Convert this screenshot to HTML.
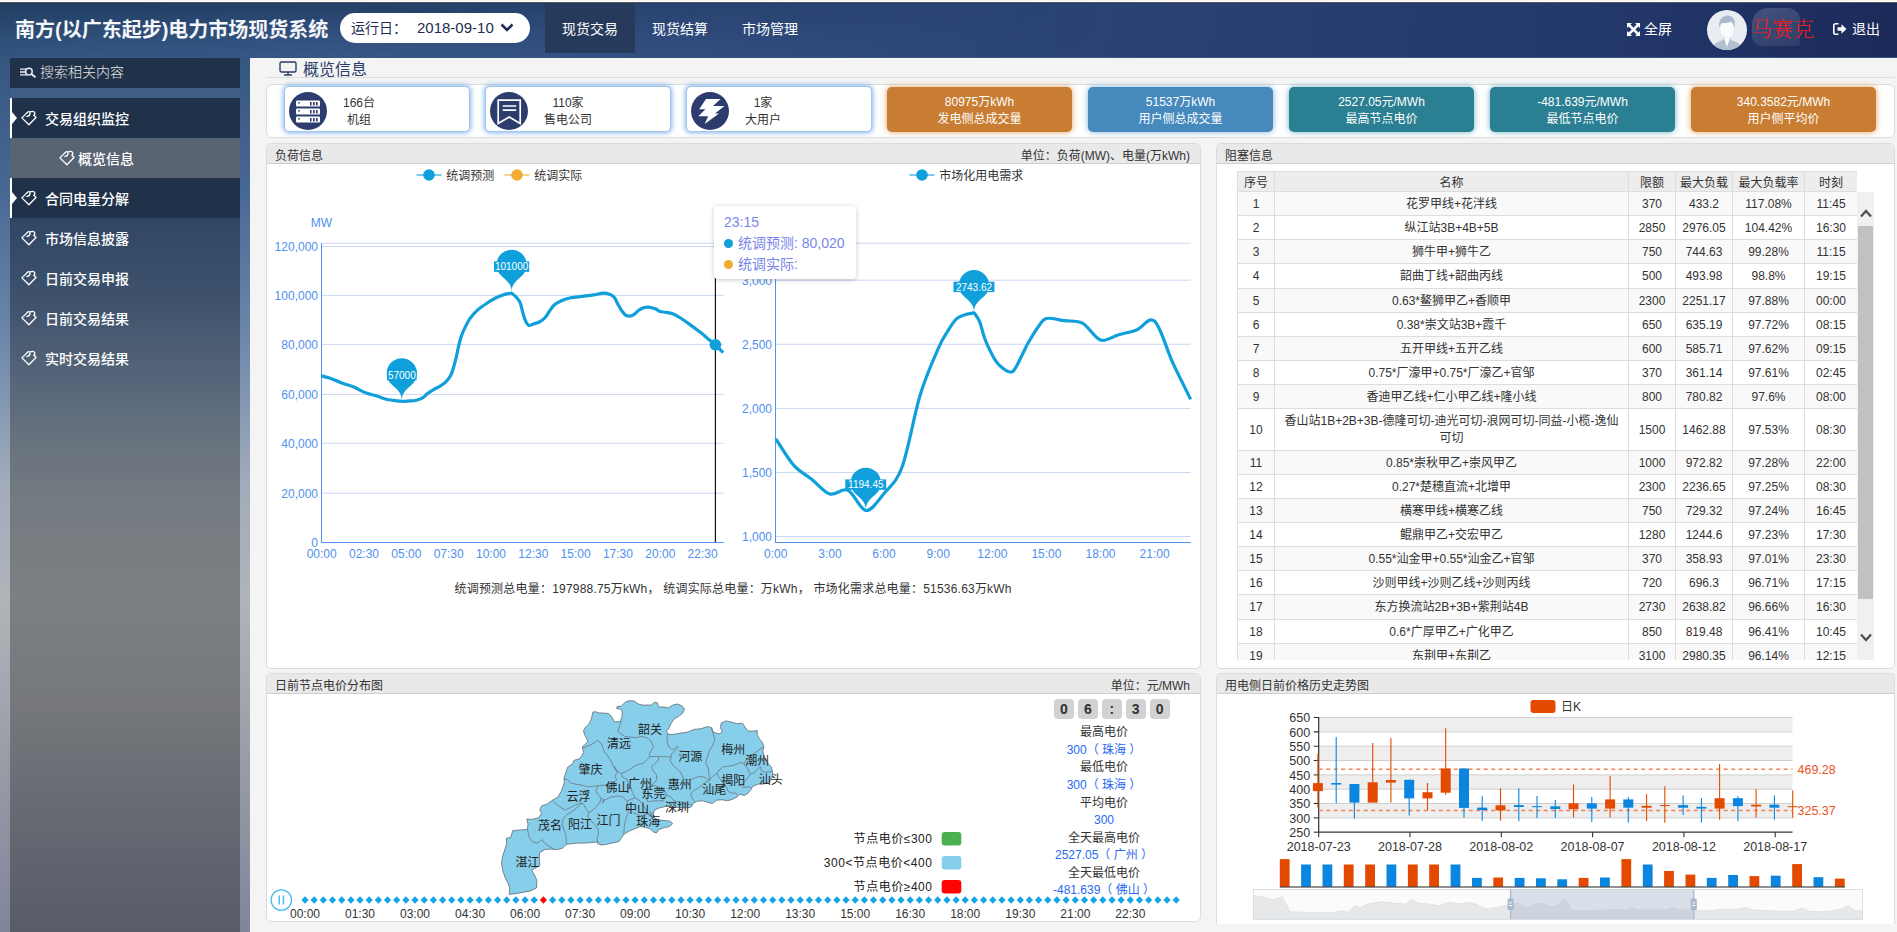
<!DOCTYPE html>
<html lang="zh-CN">
<head>
<meta charset="utf-8">
<title>南方(以广东起步)电力市场现货系统</title>
<style>
*{box-sizing:border-box;margin:0;padding:0}
html,body{width:1897px;height:932px;overflow:hidden}
body{font-family:"Liberation Sans","Noto Sans CJK SC",sans-serif;font-size:12px;color:#333;position:relative;
 background:linear-gradient(to bottom,#33547e 0px,#35567f 58px,#4a6a96 200px,#6e88ac 340px,#a0abba 480px,#b0b4ba 600px,#9b9ea8 750px,#80859a 932px);}
.abs{position:absolute}
/* header */
#topline{left:0;top:0;width:1897px;height:3px;background:linear-gradient(to bottom,#f4f4f0 0,#f4f4f0 1px,#fff 1px,#fff 2px,#54525a 2px,#54525a 3px);z-index:5}
#header{left:0;top:2px;width:1897px;height:55px;background:linear-gradient(95deg,#33557f 0%,#38588a 18%,#314c7f 40%,#294175 62%,#23386c 84%,#1b2a59 100%);color:#fff}
#hov{left:0;top:0;width:1100px;height:55px;background:linear-gradient(to bottom,rgba(10,34,60,.46) 0%,rgba(10,34,60,.14) 60%,rgba(10,34,60,0) 100%);-webkit-mask-image:linear-gradient(to right,#000 0%,#000 35%,transparent 100%);mask-image:linear-gradient(to right,#000 0%,#000 35%,transparent 100%)}
#title{left:15px;top:15px;font-size:20px;font-weight:bold;line-height:26px;white-space:nowrap;color:#f4f6f8;letter-spacing:0}
#datepill{left:340px;top:11px;width:190px;height:30px;border-radius:15px;background:#fff;color:#1f2d52;font-size:14px;line-height:30px;white-space:nowrap}
.tab{top:0;width:90px;height:51px;line-height:55px;text-align:center;font-size:14px;color:#fff}
.tab.on{background:#263a5c}
.hr{font-size:14px;color:#fff;line-height:20px;white-space:nowrap}
/* sidebar */
#side{left:10px;top:58px;width:230px;height:874px;background:linear-gradient(to bottom,#3e5c84 0px,#3f5d85 40px,#30476a 41px,#304664 160px,#3e526c 242px,#4d5e74 292px,#5c6a7c 342px,#6a747f 392px,#737a80 442px,#7c8082 542px,#76787c 642px,#686b73 742px,#585c69 874px)}
.sbox{left:0;width:230px;height:40px;background:#20314a;color:#fff;font-size:14px;font-weight:500;line-height:42px;white-space:nowrap}
.mi{left:0;width:230px;height:40px;color:#fff;font-size:14px;font-weight:500;line-height:42px;white-space:nowrap}
.mi svg,.sbox svg{position:absolute}
.mi span,.sbox span{position:absolute;left:35px;top:0}
/* main */
#main{left:250px;top:58px;width:1647px;height:874px;background:#f4f4f4}
.panel{background:#fff;border:1px solid #dcdcdc;border-radius:5px;overflow:hidden}
.ph{left:0;top:0;right:0;height:20px;background:#e9e9e9;border-bottom:1px solid #cfcfcf;font-size:12px;line-height:25px;color:#333;padding:0 10px 0 8px;white-space:nowrap}
.ph b{font-weight:normal;float:right}
.card{top:87px;width:186px;height:45px;border-radius:5px;font-size:12px;line-height:17px;text-align:center;white-space:nowrap}
.card.w{background:#fff;border:1px solid #a3c6ee;box-shadow:0 0 5px 1px #86b6ec;color:#333}
.card.c{color:#fff;padding-top:7px;width:185px}
.card .ic{position:absolute;left:4px;top:5px;width:38px;height:38px;border-radius:19px;background:#2c3d6d}
.card .tx{position:absolute;left:58px;top:8px;text-align:center}
svg text{font-family:"Liberation Sans","Noto Sans CJK SC",sans-serif}
</style>
</head>
<body>
<div id="topline" class="abs"></div>
<div id="header" class="abs"><div id="hov" class="abs"></div>
  <div id="title" class="abs">南方(以广东起步)电力市场现货系统</div>
  <div id="datepill" class="abs"><span class="abs" style="left:11px">运行日：</span><span class="abs" style="left:77px;font-size:15px">2018-09-10</span>
    <svg class="abs" style="left:160px;top:10px" width="14" height="10" viewBox="0 0 14 10"><path d="M1.5 1.5 L7 7 L12.5 1.5" fill="none" stroke="#1f2d52" stroke-width="2.6"/></svg>
  </div>
  <div class="tab on abs" style="left:545px">现货交易</div>
  <div class="tab abs" style="left:635px">现货结算</div>
  <div class="tab abs" style="left:725px">市场管理</div>
  <svg class="abs" style="left:1627px;top:21px" width="13" height="13" viewBox="0 0 13 13"><path d="M0 0h5L3.4 1.6 6.5 4.7 9.6 1.6 8 0h5v5L11.4 3.4 8.3 6.5l3.1 3.1L13 8v5H8l1.6-1.6L6.5 8.3 3.4 11.400 5 13H0V8l1.600 1.600L4.700 6.500 1.600 3.400 0 5z" fill="#fff"/></svg>
  <div class="hr abs" style="left:1644px;top:17px">全屏</div>
  <div class="abs" style="left:1707px;top:8px;width:40px;height:40px;border-radius:20px;background:#e9edf3;overflow:hidden">
    <svg width="40" height="40" viewBox="0 0 40 40"><path d="M5 40c0-6 5-8 10-9.500l2-2.500h6l2 2.500c5 1.500 10 3.500 10 9.500z" fill="#b3c0d0"/><path d="M17 28l3 9 3-9z" fill="#fdfdfe"/><ellipse cx="20" cy="19" rx="6.500" ry="8.500" fill="#fbfcfd"/><path d="M12.500 18c-1.500-7 2-12.500 8-12.500 5 0 8.500 4 7 12.500-.8-3.500-2-5.500-3.500-6.500-2 1.500-7 2-9.500 1.500-1 1-1.500 3-2 5z" fill="#a9b8cb"/></svg>
  </div>
  <div class="abs" style="left:1752px;top:6px;width:48px;height:38px;border-radius:16px 12px 3px 10px;background:linear-gradient(160deg,rgba(255,255,255,.17),rgba(255,255,255,.07))"></div>
  <div class="abs" style="left:1751px;top:13px;font-family:'Liberation Serif','Noto Serif CJK SC',serif;font-size:21px;font-weight:300;line-height:28px;color:#f41a1a;white-space:nowrap">马赛克</div>
  <svg class="abs" style="left:1833px;top:21px" width="14" height="12" viewBox="0 0 14 12"><path d="M5.500 0.800H2.500a1.700 1.700 0 0 0-1.700 1.700v7a1.700 1.700 0 0 0 1.700 1.700h3" fill="none" stroke="#fff" stroke-width="1.600"/><path d="M4.500 4.300h4V1.300L13.500 6 8.500 10.700V7.700h-4z" fill="#fff"/></svg>
  <div class="hr abs" style="left:1852px;top:17px">退出</div>
</div>
<div id="side" class="abs">
<div class="sbox abs" style="top:0;height:30px;line-height:29px;font-weight:300;color:#e6e4e0">
  <svg style="left:10px;top:8px" width="17" height="14" viewBox="0 0 17 14"><path d="M0 3.200h6M0 6h5M0 8.900h7.500" stroke="#eceef1" stroke-width="1.300"/><circle cx="8.900" cy="5.600" r="3.300" fill="none" stroke="#eceef1" stroke-width="1.500"/><path d="M11.200 8l4.300 3.300" stroke="#eceef1" stroke-width="1.900"/></svg>
  <span style="left:30px">搜索相关内容</span></div>
<div class="sbox abs" style="top:40px"><svg style="left:11px;top:12px" width="16" height="16" viewBox="0 0 16 16" fill="none" stroke="#fff" stroke-width="1.300" stroke-linejoin="round" stroke-linecap="round"><path d="M6.200 2.600 0.900 7.900 7.900 14.700 15 7.500 13 5.200"/><path d="M6.200 2.600C7.200 1.200 9.200 1.200 9 3.200 8.900 5 7.800 6.400 5.800 6.300"/><path d="M9.600 1.800C11.500 0.800 14 1.600 13.800 3.600 13.700 4.400 13.400 4.900 13 5.200"/></svg><span>交易组织监控</span>
  <i class="abs" style="left:0;top:0;width:2px;height:40px;background:#fff"></i><i class="abs" style="left:2px;top:14px;border:6px solid transparent;border-left:5px solid #fff;border-right:0"></i></div>
<div class="mi abs" style="top:80px;background:#586473"><svg style="left:49px;top:12px" width="16" height="16" viewBox="0 0 16 16" fill="none" stroke="#fff" stroke-width="1.300" stroke-linejoin="round" stroke-linecap="round"><path d="M6.200 2.600 0.900 7.900 7.900 14.700 15 7.500 13 5.200"/><path d="M6.200 2.600C7.200 1.200 9.200 1.200 9 3.200 8.900 5 7.800 6.400 5.800 6.300"/><path d="M9.600 1.800C11.500 0.800 14 1.600 13.800 3.600 13.700 4.400 13.400 4.900 13 5.200"/></svg><span style="left:68px">概览信息</span></div>
<div class="sbox abs" style="top:120px"><svg style="left:11px;top:12px" width="16" height="16" viewBox="0 0 16 16" fill="none" stroke="#fff" stroke-width="1.300" stroke-linejoin="round" stroke-linecap="round"><path d="M6.200 2.600 0.900 7.900 7.900 14.700 15 7.500 13 5.200"/><path d="M6.200 2.600C7.200 1.200 9.200 1.200 9 3.200 8.900 5 7.800 6.400 5.800 6.300"/><path d="M9.600 1.800C11.500 0.800 14 1.600 13.800 3.600 13.700 4.400 13.400 4.900 13 5.200"/></svg><span>合同电量分解</span>
  <i class="abs" style="left:0;top:0;width:2px;height:40px;background:#fff"></i><i class="abs" style="left:2px;top:14px;border:6px solid transparent;border-left:5px solid #fff;border-right:0"></i></div>
<div class="mi abs" style="top:160px"><svg style="left:11px;top:12px" width="16" height="16" viewBox="0 0 16 16" fill="none" stroke="#fff" stroke-width="1.300" stroke-linejoin="round" stroke-linecap="round"><path d="M6.200 2.600 0.900 7.900 7.900 14.700 15 7.500 13 5.200"/><path d="M6.200 2.600C7.200 1.200 9.200 1.200 9 3.200 8.900 5 7.800 6.400 5.800 6.300"/><path d="M9.600 1.800C11.500 0.800 14 1.600 13.800 3.600 13.700 4.400 13.400 4.900 13 5.200"/></svg><span>市场信息披露</span></div>
<div class="mi abs" style="top:200px"><svg style="left:11px;top:12px" width="16" height="16" viewBox="0 0 16 16" fill="none" stroke="#fff" stroke-width="1.300" stroke-linejoin="round" stroke-linecap="round"><path d="M6.200 2.600 0.900 7.900 7.900 14.700 15 7.500 13 5.200"/><path d="M6.200 2.600C7.200 1.200 9.200 1.200 9 3.200 8.900 5 7.800 6.400 5.800 6.300"/><path d="M9.600 1.800C11.500 0.800 14 1.600 13.800 3.600 13.700 4.400 13.400 4.900 13 5.200"/></svg><span>日前交易申报</span></div>
<div class="mi abs" style="top:240px"><svg style="left:11px;top:12px" width="16" height="16" viewBox="0 0 16 16" fill="none" stroke="#fff" stroke-width="1.300" stroke-linejoin="round" stroke-linecap="round"><path d="M6.200 2.600 0.900 7.900 7.900 14.700 15 7.500 13 5.200"/><path d="M6.200 2.600C7.200 1.200 9.200 1.200 9 3.200 8.900 5 7.800 6.400 5.800 6.300"/><path d="M9.600 1.800C11.500 0.800 14 1.600 13.800 3.600 13.700 4.400 13.400 4.900 13 5.200"/></svg><span>日前交易结果</span></div>
<div class="mi abs" style="top:280px"><svg style="left:11px;top:12px" width="16" height="16" viewBox="0 0 16 16" fill="none" stroke="#fff" stroke-width="1.300" stroke-linejoin="round" stroke-linecap="round"><path d="M6.200 2.600 0.900 7.900 7.900 14.700 15 7.500 13 5.200"/><path d="M6.200 2.600C7.200 1.200 9.200 1.200 9 3.200 8.900 5 7.800 6.400 5.800 6.300"/><path d="M9.600 1.800C11.500 0.800 14 1.600 13.800 3.600 13.700 4.400 13.400 4.900 13 5.200"/></svg><span>实时交易结果</span></div>
</div>
<div id="main" class="abs">
<!--MAIN-->
<svg class="abs" style="left:29px;top:2.5px" width="18" height="15" viewBox="0 0 18 15"><rect x="1" y="1" width="16" height="10" rx="1.500" fill="none" stroke="#2b3d6b" stroke-width="1.400"/><path d="M9 11v2.500M5 14h8" stroke="#2b3d6b" stroke-width="1.400"/></svg>
<div class="abs" style="left:53px;top:2px;font-size:16px;line-height:20px;color:#2b3d6b;white-space:nowrap">概览信息</div>
<div class="abs" style="left:16px;top:19px;width:1629px;height:1px;background:#dedede"></div>
<div class="abs panel" style="left:16px;top:26px;width:1629px;height:54px;border-radius:6px"></div>
<div class="abs card w" style="left:34px;top:28px;height:46px"><div class="ic"><svg width="38" height="38" viewBox="0 0 38 38"><g fill="#fff"><rect x="7" y="8.500" width="24" height="6" rx="1"/><rect x="7" y="16.500" width="24" height="6" rx="1"/><rect x="7" y="24.500" width="24" height="6" rx="1"/></g><g fill="#2c3d6d"><circle cx="10" cy="10.800" r=".9"/><circle cx="10" cy="18.800" r=".9"/><circle cx="10" cy="26.800" r=".9"/><path d="M21 10h1.600v3.500H21zM24 10h1.600v3.500H24zM27 10h1.600v3.500H27zM21 18h1.600v3.500H21zM24 18h1.600v3.500H24zM27 18h1.600v3.500H27zM21 26h1.600v3.500H21zM24 26h1.600v3.500H24zM27 26h1.600v3.500H27z"/></g></svg></div><div class="tx">166台<br>机组</div></div>
<div class="abs card w" style="left:235px;top:28px;height:46px"><div class="ic"><svg width="38" height="38" viewBox="0 0 38 38"><path d="M8.200 8.200h22v23.400L19.200 25 8.200 31.600z" fill="none" stroke="#fff" stroke-width="1.700" stroke-linejoin="miter"/><path d="M12.700 14h13.500M12.700 18.200h13.500" stroke="#fff" stroke-width="1.700"/></svg></div><div class="tx">110家<br>售电公司</div></div>
<div class="abs card w" style="left:436px;top:28px;height:46px"><div class="ic"><svg width="38" height="38" viewBox="0 0 38 38"><path d="M15 7h14.500l-7.500 7h11.500l-9.500 7.500h4L13.700 32l3.400-7.700H7.200l7.200-7H8.200z" fill="#fff"/></svg></div><div class="tx">1家<br>大用户</div></div>
<div class="abs card c" style="left:637px;top:29px;background:#c87d32;box-shadow:0 0 6px #e0a060">80975万kWh<br>发电侧总成交量</div>
<div class="abs card c" style="left:838px;top:29px;background:#4589bd;box-shadow:0 0 6px #7fb0d8">51537万kWh<br>用户侧总成交量</div>
<div class="abs card c" style="left:1039px;top:29px;background:#2a7f93;box-shadow:0 0 6px #6fb0c0">2527.05元/MWh<br>最高节点电价</div>
<div class="abs card c" style="left:1240px;top:29px;background:#2a7f93;box-shadow:0 0 6px #6fb0c0">-481.639元/MWh<br>最低节点电价</div>
<div class="abs card c" style="left:1441px;top:29px;background:#c87d32;box-shadow:0 0 6px #e0a060">340.3582元/MWh<br>用户侧平均价</div>
<div class="abs panel" id="p1" style="left:16px;top:85px;width:935px;height:526px"><div class="ph abs">负荷信息<b>单位：负荷(MW)、电量(万kWh)</b></div><!--CHART1--><svg class="abs" style="left:0;top:0" width="933" height="524" viewBox="267 144 933 524" font-size="12">
<path d="M416.5 175h25" stroke="#0f9fdb" stroke-width="2" stroke-opacity=".55"/><circle cx="429" cy="175" r="5.800" fill="#0f9fdb"/><text x="446.3" y="179.9" fill="#333">统调预测</text>
<path d="M504.5 175h25" stroke="#f0ab33" stroke-width="2" stroke-opacity=".55"/><circle cx="517" cy="175" r="5.800" fill="#f0ab33"/><text x="534.3" y="179.9" fill="#333">统调实际</text>
<path d="M909.5 175h25" stroke="#0f9fdb" stroke-width="2" stroke-opacity=".55"/><circle cx="922" cy="175" r="5.800" fill="#0f9fdb"/><text x="939.3" y="179.9" fill="#333">市场化用电需求</text>
<path d="M322 243.2H723.7" stroke="#ccd6f7" stroke-width="1"/>
<path d="M322 246.5H723.7" stroke="#ccd6f7" stroke-width="1"/>
<path d="M322 295.4H723.7" stroke="#ccd6f7" stroke-width="1"/>
<path d="M322 344.4H723.7" stroke="#ccd6f7" stroke-width="1"/>
<path d="M322 394.4H723.7" stroke="#ccd6f7" stroke-width="1"/>
<path d="M322 443.3H723.7" stroke="#ccd6f7" stroke-width="1"/>
<path d="M322 493.2H723.7" stroke="#ccd6f7" stroke-width="1"/>
<path d="M321.500 243V543M321 542.500H723.700" stroke="#5090ee" stroke-width="1" fill="none"/>
<text x="318" y="250.8" text-anchor="end" fill="#5090ee">120,000</text>
<text x="318" y="299.7" text-anchor="end" fill="#5090ee">100,000</text>
<text x="318" y="348.7" text-anchor="end" fill="#5090ee">80,000</text>
<text x="318" y="398.7" text-anchor="end" fill="#5090ee">60,000</text>
<text x="318" y="447.6" text-anchor="end" fill="#5090ee">40,000</text>
<text x="318" y="497.5" text-anchor="end" fill="#5090ee">20,000</text>
<text x="318" y="546.7" text-anchor="end" fill="#5090ee">0</text>
<text x="321.7" y="558" text-anchor="middle" fill="#5090ee">00:00</text>
<text x="364.0" y="558" text-anchor="middle" fill="#5090ee">02:30</text>
<text x="406.3" y="558" text-anchor="middle" fill="#5090ee">05:00</text>
<text x="448.7" y="558" text-anchor="middle" fill="#5090ee">07:30</text>
<text x="491.0" y="558" text-anchor="middle" fill="#5090ee">10:00</text>
<text x="533.3" y="558" text-anchor="middle" fill="#5090ee">12:30</text>
<text x="575.6" y="558" text-anchor="middle" fill="#5090ee">15:00</text>
<text x="617.9" y="558" text-anchor="middle" fill="#5090ee">17:30</text>
<text x="660.3" y="558" text-anchor="middle" fill="#5090ee">20:00</text>
<text x="702.6" y="558" text-anchor="middle" fill="#5090ee">22:30</text>
<text x="321.5" y="226.500" text-anchor="middle" fill="#5090ee">MW</text>
<path d="M776 243.2H1190.700" stroke="#ccd6f7" stroke-width="1"/>
<path d="M776 280.2H1190.700" stroke="#ccd6f7" stroke-width="1"/>
<path d="M776 344.3H1190.700" stroke="#ccd6f7" stroke-width="1"/>
<path d="M776 408.4H1190.700" stroke="#ccd6f7" stroke-width="1"/>
<path d="M776 472.5H1190.700" stroke="#ccd6f7" stroke-width="1"/>
<path d="M776 536.5H1190.700" stroke="#ccd6f7" stroke-width="1"/>
<path d="M775.500 243V543M775 542.500H1190.700" stroke="#5090ee" stroke-width="1" fill="none"/>
<text x="772" y="284.5" text-anchor="end" fill="#5090ee">3,000</text>
<text x="772" y="348.6" text-anchor="end" fill="#5090ee">2,500</text>
<text x="772" y="412.7" text-anchor="end" fill="#5090ee">2,000</text>
<text x="772" y="476.8" text-anchor="end" fill="#5090ee">1,500</text>
<text x="772" y="540.8" text-anchor="end" fill="#5090ee">1,000</text>
<text x="775.8" y="558" text-anchor="middle" fill="#5090ee">0:00</text>
<text x="829.9" y="558" text-anchor="middle" fill="#5090ee">3:00</text>
<text x="884.0" y="558" text-anchor="middle" fill="#5090ee">6:00</text>
<text x="938.2" y="558" text-anchor="middle" fill="#5090ee">9:00</text>
<text x="992.3" y="558" text-anchor="middle" fill="#5090ee">12:00</text>
<text x="1046.4" y="558" text-anchor="middle" fill="#5090ee">15:00</text>
<text x="1100.5" y="558" text-anchor="middle" fill="#5090ee">18:00</text>
<text x="1154.6" y="558" text-anchor="middle" fill="#5090ee">21:00</text>
<path d="M321.7 375.9C323.0 376.3 326.2 376.9 329.6 378.1C333.1 379.3 338.4 381.8 342.4 383.2C346.3 384.6 350.0 385.4 353.3 386.8C356.6 388.2 359.7 390.2 362.4 391.4C365.1 392.6 367.3 393.3 369.7 394.1C372.1 394.9 374.3 395.1 377.0 396.0C379.7 396.9 383.4 398.5 386.1 399.2C388.8 399.9 390.7 399.9 393.4 400.3C396.1 400.7 399.4 401.3 402.2 401.4C404.9 401.5 407.7 401.0 409.9 400.9C412.1 400.8 413.2 401.0 415.3 400.5C417.4 400.0 420.6 398.9 422.6 397.8C424.6 396.7 425.4 395.2 427.2 393.8C429.0 392.4 431.3 391.0 433.6 389.6C435.9 388.2 438.8 387.0 440.9 385.6C443.0 384.2 444.6 383.2 446.3 381.4C448.0 379.6 449.6 377.6 450.9 375.0C452.2 372.4 453.1 368.9 454.0 365.9C454.9 362.8 455.5 360.3 456.4 356.7C457.2 353.1 458.2 347.6 459.1 344.0C460.0 340.4 460.7 337.8 461.8 334.9C462.9 332.0 464.1 329.4 465.5 326.6C466.9 323.9 468.1 321.1 470.1 318.4C472.1 315.7 474.7 312.7 477.4 310.2C480.1 307.7 483.5 305.5 486.5 303.5C489.5 301.5 492.6 299.5 495.6 298.0C498.6 296.5 502.0 295.2 504.7 294.4C507.4 293.6 510.5 293.3 511.6 293.1C512.4 293.8 515.2 295.9 516.6 297.5C518.0 299.1 519.2 300.3 520.2 302.9C521.2 305.5 522.0 309.9 522.9 313.0C523.8 316.1 524.7 319.1 525.7 321.2C526.7 323.3 527.6 324.9 528.9 325.4C530.2 325.8 531.9 324.5 533.6 323.9C535.4 323.3 537.5 323.1 539.4 322.0C541.3 320.9 543.5 319.4 545.2 317.5C546.9 315.6 548.3 312.7 549.8 310.6C551.3 308.5 552.5 306.5 554.4 304.8C556.3 303.1 558.7 301.9 561.4 300.7C564.1 299.5 567.2 298.5 570.7 297.8C574.2 297.1 578.4 296.9 582.3 296.4C586.2 295.9 590.4 295.4 593.9 294.9C597.4 294.4 600.4 293.3 603.1 293.2C605.8 293.1 608.2 293.7 610.1 294.4C612.0 295.1 612.9 295.6 614.2 297.3C615.6 299.0 616.8 302.3 618.2 304.8C619.7 307.3 621.5 310.5 622.9 312.3C624.2 314.1 625.0 314.9 626.3 315.5C627.5 316.1 629.0 316.2 630.4 316.0C631.8 315.8 633.0 315.1 634.5 314.1C636.0 313.1 637.6 311.1 639.1 310.0C640.6 308.9 642.2 308.2 643.7 307.7C645.2 307.2 646.5 306.9 648.4 307.1C650.3 307.3 653.4 308.1 655.3 308.8C657.2 309.5 658.2 310.9 660.0 311.5C661.8 312.1 663.7 311.9 665.8 312.3C667.9 312.7 670.4 312.9 672.7 313.8C675.0 314.7 677.0 315.8 679.7 317.5C682.4 319.2 685.5 321.4 689.0 323.9C692.5 326.4 697.1 329.9 700.6 332.6C704.1 335.3 707.3 338.2 709.8 340.2C712.3 342.2 713.2 342.7 715.4 344.8C717.6 346.9 721.9 351.3 723.2 352.6" fill="none" stroke="#0f9fdb" stroke-width="3.200" stroke-linejoin="round"/>
<path d="M775.8 438.9C778.8 443.3 787.8 458.6 793.8 465.4C799.9 472.1 805.9 474.6 811.9 479.4C817.9 484.2 823.9 492.2 829.9 494.0C835.9 495.8 841.9 487.4 848.0 490.2C854.0 492.9 860.0 510.0 866.0 510.5C872.0 511.0 878.0 500.6 884.0 493.4C890.1 486.1 896.1 483.4 902.1 467.0C908.1 450.6 914.1 415.0 920.1 395.3C926.1 375.6 933.6 359.3 938.2 348.7C942.7 338.1 944.5 336.4 947.5 331.5C950.5 326.6 953.2 321.9 956.2 319.1C959.2 316.3 962.6 315.6 965.6 314.6C968.6 313.6 972.8 313.2 974.2 312.9C975.1 314.3 977.7 317.0 979.5 321.4C981.3 325.8 983.0 333.9 985.1 339.5C987.2 345.1 990.0 350.7 992.3 354.9C994.6 359.1 996.0 361.9 999.0 364.8C1002.0 367.7 1007.5 371.6 1010.3 372.0C1013.1 372.4 1013.3 371.4 1015.8 367.4C1018.3 363.4 1023.4 352.0 1025.5 347.9C1027.6 343.8 1026.3 346.0 1028.4 342.5C1030.5 339.0 1035.1 331.0 1038.1 327.0C1041.1 323.0 1042.0 319.6 1046.4 318.5C1050.8 317.4 1058.4 319.9 1064.4 320.7C1070.5 321.5 1076.5 320.0 1082.5 323.2C1088.5 326.4 1094.5 338.1 1100.5 340.0C1106.5 341.9 1112.5 336.4 1118.6 334.7C1124.6 333.0 1130.6 332.2 1136.6 330.0C1142.6 327.8 1148.6 315.9 1154.6 321.3C1160.7 326.8 1166.7 349.7 1172.7 362.7C1178.7 375.7 1187.7 393.3 1190.7 399.4" fill="none" stroke="#0f9fdb" stroke-width="3.200" stroke-linejoin="round"/>
<path d="M389.58 382.18A15.1 15.1 0 1 1 414.02 382.18C408.52 388.68 401.80 390.80 401.80 400.30C401.80 390.80 395.08 388.68 389.58 382.18Z" fill="#0f9fdb"/><rect x="387.1" y="369.9" width="29.5" height="10.400" fill="#0f9fdb"/><text x="401.8" y="378.7" text-anchor="middle" font-size="10" fill="#fff">57000</text>
<path d="M499.38 273.68A15.1 15.1 0 1 1 523.82 273.68C518.32 280.18 511.60 282.30 511.60 291.80C511.60 282.30 504.88 280.18 499.38 273.68Z" fill="#0f9fdb"/><rect x="494.0" y="261.4" width="35.2" height="10.400" fill="#0f9fdb"/><text x="511.6" y="270.2" text-anchor="middle" font-size="10" fill="#fff">101000</text>
<path d="M853.58 491.68A15.1 15.1 0 1 1 878.02 491.68C872.52 498.18 865.80 500.30 865.80 509.80C865.80 500.30 859.08 498.18 853.58 491.68Z" fill="#0f9fdb"/><rect x="845.3" y="479.4" width="40.9" height="10.400" fill="#0f9fdb"/><text x="865.8" y="488.2" text-anchor="middle" font-size="10" fill="#fff">1194.45</text>
<path d="M961.78 293.98A15.1 15.1 0 1 1 986.22 293.98C980.72 300.48 974.00 302.60 974.00 312.10C974.00 302.60 967.28 300.48 961.78 293.98Z" fill="#0f9fdb"/><rect x="953.5" y="281.7" width="40.9" height="10.400" fill="#0f9fdb"/><text x="974.0" y="290.5" text-anchor="middle" font-size="10" fill="#fff">2743.62</text>
<path d="M715.400 278V542" stroke="#000" stroke-width="1.100"/>
<circle cx="715.400" cy="344.800" r="5.800" fill="#0f9fdb"/>
<text x="733" y="592.500" text-anchor="middle" fill="#333" textLength="557" lengthAdjust="spacing">统调预测总电量：197988.75万kWh， 统调实际总电量：万kWh， 市场化需求总电量：51536.63万kWh</text>
</svg>
<div class="abs" style="left:447px;top:62px;width:142px;height:73px;background:#fff;border-radius:4px;box-shadow:0 1px 5px rgba(0,0,0,.22);color:#7a86e8;font-size:14px;line-height:21px;padding:6px 10px 0;white-space:nowrap">23:15<br><i style="display:inline-block;width:9px;height:9px;border-radius:5px;background:#0f9fdb;margin-right:5px"></i>统调预测: 80,020<br><i style="display:inline-block;width:9px;height:9px;border-radius:5px;background:#f0ab33;margin-right:5px"></i>统调实际: </div><!--/CHART1--></div>
<div class="abs panel" id="p2" style="left:966px;top:85px;width:679px;height:526px"><div class="ph abs">阻塞信息</div><!--TABLE--><style>
#tb{position:absolute;left:20px;top:27px;width:620px;height:489px;overflow:hidden}
#tb table{border-collapse:collapse;table-layout:fixed;width:620px;font-size:12px;color:#333}
#tb td,#tb th{border:1px solid #ddd;padding:4px 0 2px;line-height:17.140px;text-align:center;font-weight:normal;white-space:nowrap;overflow:hidden}
#tb th{background:#ededed;padding:3px 0 0;line-height:16px}
#tb tr.o td{background:#f9f9f9}
#sb{position:absolute;left:640px;top:48px;width:17px;height:468px;background:#f0f0f0}
#sb i{position:absolute;left:1.400px;top:34px;width:14.600px;height:373px;background:#c1c1c1}
</style><div id="tb"><table><colgroup><col style="width:37px"><col style="width:354px"><col style="width:47px"><col style="width:57px"><col style="width:72px"><col style="width:53px"></colgroup><tr><th>序号</th><th>名称</th><th>限额</th><th>最大负载</th><th>最大负载率</th><th>时刻</th></tr><tr class="o"><td>1</td><td>花罗甲线+花泮线</td><td>370</td><td>433.2</td><td>117.08%</td><td>11:45</td></tr><tr><td>2</td><td>纵江站3B+4B+5B</td><td>2850</td><td>2976.05</td><td>104.42%</td><td>16:30</td></tr><tr class="o"><td>3</td><td>狮牛甲+狮牛乙</td><td>750</td><td>744.63</td><td>99.28%</td><td>11:15</td></tr><tr><td>4</td><td>韶曲丁线+韶曲丙线</td><td>500</td><td>493.98</td><td>98.8%</td><td>19:15</td></tr><tr class="o"><td>5</td><td>0.63*鳌狮甲乙+香顺甲</td><td>2300</td><td>2251.17</td><td>97.88%</td><td>00:00</td></tr><tr><td>6</td><td>0.38*崇文站3B+霞千</td><td>650</td><td>635.19</td><td>97.72%</td><td>08:15</td></tr><tr class="o"><td>7</td><td>五开甲线+五开乙线</td><td>600</td><td>585.71</td><td>97.62%</td><td>09:15</td></tr><tr><td>8</td><td>0.75*厂濠甲+0.75*厂濠乙+官邹</td><td>370</td><td>361.14</td><td>97.61%</td><td>02:45</td></tr><tr class="o"><td>9</td><td>香迪甲乙线+仁小甲乙线+隆小线</td><td>800</td><td>780.82</td><td>97.6%</td><td>08:00</td></tr><tr><td>10</td><td>香山站1B+2B+3B-德隆可切-迪光可切-浪网可切-同益-小榄-逸仙<br>可切</td><td>1500</td><td>1462.88</td><td>97.53%</td><td>08:30</td></tr><tr class="o"><td>11</td><td>0.85*崇秋甲乙+崇风甲乙</td><td>1000</td><td>972.82</td><td>97.28%</td><td>22:00</td></tr><tr><td>12</td><td>0.27*楚穗直流+北增甲</td><td>2300</td><td>2236.65</td><td>97.25%</td><td>08:30</td></tr><tr class="o"><td>13</td><td>横寒甲线+横寒乙线</td><td>750</td><td>729.32</td><td>97.24%</td><td>16:45</td></tr><tr><td>14</td><td>鲲鼎甲乙+交宏甲乙</td><td>1280</td><td>1244.6</td><td>97.23%</td><td>17:30</td></tr><tr class="o"><td>15</td><td>0.55*汕金甲+0.55*汕金乙+官邹</td><td>370</td><td>358.93</td><td>97.01%</td><td>23:30</td></tr><tr><td>16</td><td>沙则甲线+沙则乙线+沙则丙线</td><td>720</td><td>696.3</td><td>96.71%</td><td>17:15</td></tr><tr class="o"><td>17</td><td>东方换流站2B+3B+紫荆站4B</td><td>2730</td><td>2638.82</td><td>96.66%</td><td>16:30</td></tr><tr><td>18</td><td>0.6*广厚甲乙+广化甲乙</td><td>850</td><td>819.48</td><td>96.41%</td><td>10:45</td></tr><tr class="o"><td>19</td><td>东荆甲+东荆乙</td><td>3100</td><td>2980.35</td><td>96.14%</td><td>12:15</td></tr><tr><td>20</td><td>0.5*罗北甲乙+0.5*北花甲乙</td><td>1800</td><td>1726.2</td><td>95.9%</td><td>18:45</td></tr></table></div><div id="sb"><i></i><svg class="abs" style="left:2.500px;top:16.500px" width="12" height="9" viewBox="0 0 12 9"><path d="M1 7.500 6 2l5 5.500" fill="none" stroke="#505050" stroke-width="2.300"/></svg><svg class="abs" style="left:2.500px;top:441px" width="12" height="9" viewBox="0 0 12 9"><path d="M1 1.500 6 7l5-5.500" fill="none" stroke="#505050" stroke-width="2.300"/></svg></div><!--/TABLE--></div>
<div class="abs panel" id="p3" style="left:16px;top:615px;width:935px;height:249px"><div class="ph abs">日前节点电价分布图<b>单位：元/MWh</b></div><!--MAP--><svg class="abs" style="left:0;top:0" width="933" height="247" viewBox="267 674 933 247" font-size="12">
<path d="M552.8 800.0L558.1 797.0L561.5 790.8L564.3 782.9L564.0 778.4L565.4 773.9L567.7 767.1L572.7 763.7L573.9 760.4L579.5 758.7L581.8 755.8L583.5 752.5L582.3 746.8L585.1 744.6L588.0 741.2L585.1 735.6L583.5 731.1L585.1 727.7L589.1 723.7L591.3 719.2L593.0 711.9L596.4 711.9L599.2 713.0L603.2 713.0L608.8 713.6L612.2 717.5L614.4 722.0L620.1 721.5L621.8 717.5L622.3 711.9L620.6 709.1L616.7 708.5L617.3 706.3L621.2 706.3L625.7 701.8L630.2 700.6L634.7 701.2L638.1 704.0L642.6 705.1L648.2 705.1L651.3 705.1L654.6 702.3L657.5 702.9L658.6 707.4L662.5 706.8L668.2 708.0L672.7 705.1L677.2 704.0L681.7 705.7L684.5 709.1L682.8 713.0L679.4 715.8L673.8 719.2L671.0 723.7L668.7 728.8L666.5 731.1L668.2 734.4L673.8 734.4L679.4 733.3L687.3 732.2L694.1 729.4L700.8 728.8L707.6 726.5L711.5 727.7L713.2 732.2L718.9 733.9L722.3 732.2L720.6 727.7L721.1 723.2L725.6 720.9L731.3 722.0L736.9 723.7L742.5 723.2L745.4 727.7L748.2 731.1L753.8 731.1L757.2 730.5L757.2 734.4L759.4 738.9L762.3 742.3L763.9 746.8L762.8 751.3L763.9 755.8L767.3 762.6L771.3 767.1L772.4 771.6L773.0 776.1L769.6 781.8L763.9 784.0L758.3 784.0L752.7 786.3L751.0 789.6L748.2 793.0L744.5 795.4L739.2 794.3L737.0 797.0L732.7 799.2L727.4 800.8L722.0 799.7L716.6 800.2L712.3 803.5L708.0 802.4L702.7 800.8L697.3 801.3L693.6 802.9L690.9 807.2L686.6 807.8L675.8 807.2L667.3 806.1L659.8 807.8L654.4 809.9L653.3 814.7L654.4 817.9L658.7 820.1L665.1 820.6L670.5 821.2L672.6 823.8L669.4 826.5L663.0 828.1L658.7 829.7L656.5 833.0L653.3 831.9L650.1 828.7L645.8 827.6L640.4 826.5L635.1 828.7L629.7 830.8L624.3 834.0L621.1 838.3L619.0 841.6L611.5 843.2L603.9 844.8L600.0 844.9L597.7 841.9L591.8 842.5L584.7 843.1L577.6 843.1L571.7 843.7L566.4 844.3L562.3 848.4L556.4 849.6L550.5 849.0L544.6 849.6L539.8 852.5L539.2 856.1L539.8 865.5L537.5 866.7L531.6 870.2L535.1 876.1L536.9 880.9L536.5 887.9L530.4 890.9L518.6 893.2L509.2 894.4L509.7 887.9L508.0 883.2L505.0 877.3L502.7 870.2L501.5 863.2L502.7 856.1L505.0 849.0L506.8 843.1L506.2 838.4L510.9 837.2L512.7 830.7L518.6 830.1L527.4 829.5L528.0 824.2L526.9 818.9L531.6 819.5L538.7 817.7L541.6 813.6L539.8 809.5L541.6 805.9L546.9 804.2Z" fill="#87ceeb" stroke="#6b7780" stroke-width=".9" stroke-linejoin="round"/>
<path d="M621.3 721.5L619.2 726.8L618.1 731.7L621.3 734.3L625.1 736.5L630.4 737.0L635.8 737.6L641.2 736.5L646.5 737.6L650.8 740.8L653.5 746.2L651.4 750.4L649.2 754.2L649.8 756.9M649.8 756.9L655.1 756.3L659.4 756.7L664.8 756.3L669.6 757.4M668.0 733.3L666.9 737.6L667.5 742.9L669.1 747.2L672.3 749.9L675.0 748.3L677.1 746.4L678.2 747.2L675.5 750.4L672.3 753.1L669.6 757.4M671.3 756.1L670.2 760.9L672.9 765.2L677.2 769.0L681.0 772.7L682.6 777.0L684.7 779.2L690.1 779.7L694.4 778.1L698.7 776.5L704.0 777.0L707.8 779.2L709.4 780.2M709.4 780.2L705.1 782.9L699.7 787.2L694.4 790.4L690.6 793.6L692.2 797.9L694.4 801.7M711.5 727.7L714.8 740.0L712.6 745.4L709.4 750.7L707.8 756.1L705.6 762.5L708.3 767.9L708.9 774.3L709.9 778.6L709.4 780.2M709.4 780.2L712.6 776.5L716.9 773.3L719.1 770.0L723.3 766.8L728.7 766.3L734.1 765.2L738.4 763.1L742.7 762.5L744.3 764.7M716.9 773.3L719.1 777.6L723.3 782.9L727.1 788.3L728.2 791.5L731.9 793.1L736.2 793.1L737.3 794.9M744.3 764.7L745.9 759.8L750.2 756.1L755.5 752.3L760.4 749.1L763.6 747.0M744.3 764.7L747.5 767.9L749.1 772.2L750.2 774.3M750.2 774.3L754.5 772.2L758.8 768.4L760.4 766.8L761.4 771.1L765.2 772.2L770.6 771.7L772.7 771.1M750.2 774.3L748.0 777.6L743.7 782.9L741.1 785.6L743.2 787.7L748.0 786.7L751.2 787.7M649.8 756.9L646.5 760.1L643.3 763.3L638.0 764.4L633.7 766.5L629.4 769.8L625.1 771.9L621.3 773.5M582.3 746.8L585.1 748.0L586.4 746.2L590.7 745.1L595.0 742.4L597.2 740.2L599.9 741.9L602.5 746.2L604.1 751.5L608.4 756.9L611.1 761.2L613.3 766.5L616.5 770.8L621.3 773.5M659.0 756.1L658.4 760.4L654.7 763.6L651.5 766.8L653.1 771.1L656.3 774.3L656.8 779.7L654.1 782.9L651.5 785.1M621.3 773.5L622.4 777.3L627.2 779.4L628.8 784.8L630.4 789.1L630.7 786.8L632.3 792.2L635.0 797.6M616.5 770.8L614.1 766.4L617.3 771.8L615.1 776.1L616.7 779.9L614.1 782.5L608.7 784.1L603.3 785.2L598.0 785.8M564.1 778.8L567.9 779.9L570.6 783.1L575.4 784.1L581.9 785.2L587.2 786.8L592.6 786.3L598.0 785.8M598.0 785.8L595.8 791.1L598.5 795.4L601.2 798.1M601.2 798.1L604.4 800.2L603.3 802.9L602.0 801.6L604.4 799.9L606.5 799.2L610.8 797.0L615.1 796.5L619.4 796.0L623.7 797.6L626.9 801.3M626.9 801.3L631.2 799.2L635.0 797.6M601.2 798.1L599.6 802.9L595.8 807.2L592.6 810.4L588.8 812.6M588.8 812.6L586.2 809.4L584.0 805.1L581.9 802.9M552.9 800.2L556.1 804.0L560.4 807.2L564.7 809.9L569.0 808.3L573.3 806.2L577.6 804.0L581.9 802.9M581.9 802.9L577.6 807.2L572.2 811.5L566.8 814.7L563.1 819.0L562.0 824.4L564.1 829.8L565.8 835.1L566.3 841.6L566.8 844.8M588.8 812.6L587.8 816.9L591.5 821.2L594.7 824.4L598.0 828.7L598.5 834.1L596.9 838.4L598.0 844.8M626.9 801.3L628.0 806.2L629.1 810.4L626.9 815.8L625.3 821.2L624.3 826.5L623.7 834.1M632.9 812.6L640.4 815.8L647.9 813.7L653.3 814.7M635.0 797.6L639.8 800.8L643.0 805.1L646.3 810.4L648.4 814.7L650.1 811.5L653.3 814.7M651.5 785.1L657.9 786.7L664.3 790.4L666.5 793.6L665.4 797.9L662.2 801.2L663.0 800.8L654.4 800.8L647.9 801.8L645.8 797.6L642.6 792.2L647.9 787.9L653.3 785.8L651.5 785.1M666.5 794.7L670.8 796.9L672.9 800.1L678.3 802.2L687.9 804.4L692.2 804.4M527.4 829.5L529.2 837.2L532.8 841.9L537.5 843.1L542.2 839.6L544.6 843.1L549.3 846.6L554.0 849.0" fill="none" stroke="#6b7780" stroke-width=".8" stroke-linejoin="round"/>
<text x="650.0" y="734.1" text-anchor="middle" fill="#222">韶关</text>
<text x="619.0" y="747.9" text-anchor="middle" fill="#222">清远</text>
<text x="690.3" y="760.9" text-anchor="middle" fill="#222">河源</text>
<text x="733.3" y="753.6" text-anchor="middle" fill="#222">梅州</text>
<text x="757.3" y="765.0" text-anchor="middle" fill="#222">潮州</text>
<text x="770.8" y="783.7" text-anchor="middle" fill="#222">汕头</text>
<text x="733.3" y="784.6" text-anchor="middle" fill="#222">揭阳</text>
<text x="714.3" y="793.6" text-anchor="middle" fill="#222">汕尾</text>
<text x="679.8" y="789.1" text-anchor="middle" fill="#222">惠州</text>
<text x="653.6" y="798.1" text-anchor="middle" fill="#222">东莞</text>
<text x="677.0" y="811.6" text-anchor="middle" fill="#222">深圳</text>
<text x="640.0" y="787.9" text-anchor="middle" fill="#222">广州</text>
<text x="617.6" y="791.5" text-anchor="middle" fill="#222">佛山</text>
<text x="590.5" y="774.1" text-anchor="middle" fill="#222">肇庆</text>
<text x="578.5" y="800.5" text-anchor="middle" fill="#222">云浮</text>
<text x="637.0" y="813.1" text-anchor="middle" fill="#222">中山</text>
<text x="648.2" y="826.0" text-anchor="middle" fill="#222">珠海</text>
<text x="608.5" y="825.1" text-anchor="middle" fill="#222">江门</text>
<text x="580.0" y="828.7" text-anchor="middle" fill="#222">阳江</text>
<text x="550.0" y="830.2" text-anchor="middle" fill="#222">茂名</text>
<text x="527.4" y="867.2" text-anchor="middle" fill="#222">湛江</text>
<text x="932" y="843.1" text-anchor="end" fill="#222" textLength="78.4" lengthAdjust="spacing">节点电价≤300</text><rect x="941.700" y="832.0" width="19.600" height="13.500" rx="3" fill="#4caf50"/>
<text x="932" y="867.1" text-anchor="end" fill="#222" textLength="108.3" lengthAdjust="spacing">300&lt;节点电价&lt;400</text><rect x="941.700" y="856.0" width="19.600" height="13.500" rx="3" fill="#87ceeb"/>
<text x="932" y="891.1" text-anchor="end" fill="#222" textLength="78.4" lengthAdjust="spacing">节点电价≥400</text><rect x="941.700" y="880.0" width="19.600" height="13.500" rx="3" fill="#fb0505"/>
<path d="M305.0 896.300l3.600 3.700-3.600 3.700-3.600-3.700zM314.2 896.300l3.600 3.700-3.600 3.700-3.600-3.700zM323.3 896.300l3.600 3.700-3.600 3.700-3.600-3.700zM332.5 896.300l3.600 3.700-3.600 3.700-3.600-3.700zM341.7 896.300l3.600 3.700-3.600 3.700-3.600-3.700zM350.9 896.300l3.600 3.700-3.600 3.700-3.600-3.700zM360.0 896.300l3.600 3.700-3.600 3.700-3.600-3.700zM369.2 896.300l3.600 3.700-3.600 3.700-3.600-3.700zM378.4 896.300l3.600 3.700-3.600 3.700-3.600-3.700zM387.5 896.300l3.600 3.700-3.600 3.700-3.600-3.700zM396.7 896.300l3.600 3.700-3.600 3.700-3.600-3.700zM405.9 896.300l3.600 3.700-3.600 3.700-3.600-3.700zM415.0 896.300l3.600 3.700-3.600 3.700-3.600-3.700zM424.2 896.300l3.600 3.700-3.600 3.700-3.600-3.700zM433.4 896.300l3.600 3.700-3.600 3.700-3.600-3.700zM442.6 896.300l3.600 3.700-3.600 3.700-3.600-3.700zM451.7 896.300l3.600 3.700-3.600 3.700-3.600-3.700zM460.9 896.300l3.600 3.700-3.600 3.700-3.600-3.700zM470.1 896.300l3.600 3.700-3.600 3.700-3.600-3.700zM479.2 896.300l3.600 3.700-3.600 3.700-3.600-3.700zM488.4 896.300l3.600 3.700-3.600 3.700-3.600-3.700zM497.6 896.300l3.600 3.700-3.600 3.700-3.600-3.700zM506.7 896.300l3.600 3.700-3.600 3.700-3.600-3.700zM515.9 896.300l3.600 3.700-3.600 3.700-3.600-3.700zM525.1 896.300l3.600 3.700-3.600 3.700-3.600-3.700zM534.2 896.300l3.600 3.700-3.600 3.700-3.600-3.700zM552.6 896.300l3.600 3.700-3.600 3.700-3.600-3.700zM561.8 896.300l3.600 3.700-3.600 3.700-3.600-3.700zM570.9 896.300l3.600 3.700-3.600 3.700-3.600-3.700zM580.1 896.300l3.600 3.700-3.600 3.700-3.600-3.700zM589.3 896.300l3.600 3.700-3.600 3.700-3.600-3.700zM598.4 896.300l3.600 3.700-3.600 3.700-3.600-3.700zM607.6 896.300l3.600 3.700-3.600 3.700-3.600-3.700zM616.8 896.300l3.600 3.700-3.600 3.700-3.600-3.700zM626.0 896.300l3.600 3.700-3.600 3.700-3.600-3.700zM635.1 896.300l3.600 3.700-3.600 3.700-3.600-3.700zM644.3 896.300l3.600 3.700-3.600 3.700-3.600-3.700zM653.5 896.300l3.600 3.700-3.600 3.700-3.600-3.700zM662.6 896.300l3.600 3.700-3.600 3.700-3.600-3.700zM671.8 896.300l3.600 3.700-3.600 3.700-3.600-3.700zM681.0 896.300l3.600 3.700-3.600 3.700-3.600-3.700zM690.1 896.300l3.600 3.700-3.600 3.700-3.600-3.700zM699.3 896.300l3.600 3.700-3.600 3.700-3.600-3.700zM708.5 896.300l3.600 3.700-3.600 3.700-3.600-3.700zM717.6 896.300l3.600 3.700-3.600 3.700-3.600-3.700zM726.8 896.300l3.600 3.700-3.600 3.700-3.600-3.700zM736.0 896.300l3.600 3.700-3.600 3.700-3.600-3.700zM745.2 896.300l3.600 3.700-3.600 3.700-3.600-3.700zM754.3 896.300l3.600 3.700-3.600 3.700-3.600-3.700zM763.5 896.300l3.600 3.700-3.600 3.700-3.600-3.700zM772.7 896.300l3.600 3.700-3.600 3.700-3.600-3.700zM781.8 896.300l3.600 3.700-3.600 3.700-3.600-3.700zM791.0 896.300l3.600 3.700-3.600 3.700-3.600-3.700zM800.2 896.300l3.600 3.700-3.600 3.700-3.600-3.700zM809.4 896.300l3.600 3.700-3.600 3.700-3.600-3.700zM818.5 896.300l3.600 3.700-3.600 3.700-3.600-3.700zM827.7 896.300l3.600 3.700-3.600 3.700-3.600-3.700zM836.9 896.300l3.600 3.700-3.600 3.700-3.600-3.700zM846.0 896.300l3.600 3.700-3.600 3.700-3.600-3.700zM855.2 896.300l3.600 3.700-3.600 3.700-3.600-3.700zM864.4 896.300l3.600 3.700-3.600 3.700-3.600-3.700zM873.5 896.300l3.600 3.700-3.600 3.700-3.600-3.700zM882.7 896.300l3.600 3.700-3.600 3.700-3.600-3.700zM891.9 896.300l3.600 3.700-3.600 3.700-3.600-3.700zM901.0 896.300l3.600 3.700-3.600 3.700-3.600-3.700zM910.2 896.300l3.600 3.700-3.600 3.700-3.600-3.700zM919.4 896.300l3.600 3.700-3.600 3.700-3.600-3.700zM928.6 896.300l3.600 3.700-3.600 3.700-3.600-3.700zM937.7 896.300l3.600 3.700-3.600 3.700-3.600-3.700zM946.9 896.300l3.600 3.700-3.600 3.700-3.600-3.700zM956.1 896.300l3.600 3.700-3.600 3.700-3.600-3.700zM965.2 896.300l3.600 3.700-3.600 3.700-3.600-3.700zM974.4 896.300l3.600 3.700-3.600 3.700-3.600-3.700zM983.6 896.300l3.600 3.700-3.600 3.700-3.600-3.700zM992.8 896.300l3.600 3.700-3.600 3.700-3.600-3.700zM1001.9 896.300l3.600 3.700-3.600 3.700-3.600-3.700zM1011.1 896.300l3.600 3.700-3.600 3.700-3.600-3.700zM1020.3 896.300l3.600 3.700-3.600 3.700-3.600-3.700zM1029.4 896.300l3.600 3.700-3.600 3.700-3.600-3.700zM1038.6 896.300l3.600 3.700-3.600 3.700-3.600-3.700zM1047.8 896.300l3.600 3.700-3.600 3.700-3.600-3.700zM1056.9 896.300l3.600 3.700-3.600 3.700-3.600-3.700zM1066.1 896.300l3.600 3.700-3.600 3.700-3.600-3.700zM1075.3 896.300l3.600 3.700-3.600 3.700-3.600-3.700zM1084.5 896.300l3.600 3.700-3.600 3.700-3.600-3.700zM1093.6 896.300l3.600 3.700-3.600 3.700-3.600-3.700zM1102.8 896.300l3.600 3.700-3.600 3.700-3.600-3.700zM1112.0 896.300l3.600 3.700-3.600 3.700-3.600-3.700zM1121.1 896.300l3.600 3.700-3.600 3.700-3.600-3.700zM1130.3 896.300l3.600 3.700-3.600 3.700-3.600-3.700zM1139.5 896.300l3.600 3.700-3.600 3.700-3.600-3.700zM1148.6 896.300l3.600 3.700-3.600 3.700-3.600-3.700zM1157.8 896.300l3.600 3.700-3.600 3.700-3.600-3.700zM1167.0 896.300l3.600 3.700-3.600 3.700-3.600-3.700zM1176.2 896.300l3.600 3.700-3.600 3.700-3.600-3.700z" fill="#14a4e8"/>
<path d="M543.4 896.300l3.600 3.700-3.600 3.700-3.600-3.700z" fill="#f20d0d"/>
<text x="305.0" y="917.600" text-anchor="middle" fill="#333">00:00</text>
<text x="360.0" y="917.600" text-anchor="middle" fill="#333">01:30</text>
<text x="415.0" y="917.600" text-anchor="middle" fill="#333">03:00</text>
<text x="470.1" y="917.600" text-anchor="middle" fill="#333">04:30</text>
<text x="525.1" y="917.600" text-anchor="middle" fill="#333">06:00</text>
<text x="580.1" y="917.600" text-anchor="middle" fill="#333">07:30</text>
<text x="635.1" y="917.600" text-anchor="middle" fill="#333">09:00</text>
<text x="690.1" y="917.600" text-anchor="middle" fill="#333">10:30</text>
<text x="745.2" y="917.600" text-anchor="middle" fill="#333">12:00</text>
<text x="800.2" y="917.600" text-anchor="middle" fill="#333">13:30</text>
<text x="855.2" y="917.600" text-anchor="middle" fill="#333">15:00</text>
<text x="910.2" y="917.600" text-anchor="middle" fill="#333">16:30</text>
<text x="965.2" y="917.600" text-anchor="middle" fill="#333">18:00</text>
<text x="1020.3" y="917.600" text-anchor="middle" fill="#333">19:30</text>
<text x="1075.3" y="917.600" text-anchor="middle" fill="#333">21:00</text>
<text x="1130.3" y="917.600" text-anchor="middle" fill="#333">22:30</text>
<circle cx="281.300" cy="900" r="10.200" fill="#fff" stroke="#4cbcf0" stroke-width="1.300"/><path d="M279.200 895.500v9M283.400 895.500v9" stroke="#4cbcf0" stroke-width="1.500"/>
</svg>
<div class="abs" style="left:787.0px;top:25px;width:20px;height:20px;border-radius:4px;background:#d2d2d2;color:#333;font-size:14px;font-weight:bold;line-height:20px;text-align:center">0</div>
<div class="abs" style="left:810.9px;top:25px;width:20px;height:20px;border-radius:4px;background:#d2d2d2;color:#333;font-size:14px;font-weight:bold;line-height:20px;text-align:center">6</div>
<div class="abs" style="left:834.8px;top:25px;width:20px;height:20px;border-radius:4px;background:#d2d2d2;color:#333;font-size:14px;font-weight:bold;line-height:20px;text-align:center">:</div>
<div class="abs" style="left:858.7px;top:25px;width:20px;height:20px;border-radius:4px;background:#d2d2d2;color:#333;font-size:14px;font-weight:bold;line-height:20px;text-align:center">3</div>
<div class="abs" style="left:882.6px;top:25px;width:20px;height:20px;border-radius:4px;background:#d2d2d2;color:#333;font-size:14px;font-weight:bold;line-height:20px;text-align:center">0</div>
<div class="abs" style="left:737px;top:50.4px;width:200px;text-align:center;font-size:12px;line-height:17.530px;color:#333;white-space:nowrap"><div>最高电价</div><div style="color:#2869f4">300（ 珠海 ）</div><div>最低电价</div><div style="color:#2869f4">300（ 珠海 ）</div><div>平均电价</div><div style="color:#2869f4">300</div><div>全天最高电价</div><div style="color:#2869f4">2527.05（ 广州 ）</div><div>全天最低电价</div><div style="color:#2869f4">-481.639（ 佛山 ）</div></div><!--/MAP--></div>
<div class="abs panel" id="p4" style="left:966px;top:615px;width:679px;height:251px;border-bottom:0;border-radius:5px 5px 0 0"><div class="ph abs">用电侧日前价格历史走势图</div><!--KLINE--><svg class="abs" style="left:0;top:0" width="676" height="250" viewBox="1217 674 676 250" font-size="12.500">
<rect x="1530.500" y="700" width="25" height="13" rx="3" fill="#e34a00"/><text x="1561" y="711" fill="#333" font-size="12">日K</text>
<rect x="1318.7" y="717.5" width="473.8" height="14.3" fill="#eeeeee"/>
<rect x="1318.7" y="746.2" width="473.8" height="14.3" fill="#eeeeee"/>
<rect x="1318.7" y="774.9" width="473.8" height="14.3" fill="#eeeeee"/>
<rect x="1318.7" y="803.5" width="473.8" height="14.3" fill="#eeeeee"/>
<path d="M1318.7 817.9H1792.5" stroke="#cfcfcf" stroke-width="1"/>
<path d="M1318.7 803.5H1792.5" stroke="#cfcfcf" stroke-width="1"/>
<path d="M1318.7 789.2H1792.5" stroke="#cfcfcf" stroke-width="1"/>
<path d="M1318.7 774.9H1792.5" stroke="#cfcfcf" stroke-width="1"/>
<path d="M1318.7 760.5H1792.5" stroke="#cfcfcf" stroke-width="1"/>
<path d="M1318.7 746.2H1792.5" stroke="#cfcfcf" stroke-width="1"/>
<path d="M1318.7 731.9H1792.5" stroke="#cfcfcf" stroke-width="1"/>
<path d="M1318.7 717.5H1792.5" stroke="#cfcfcf" stroke-width="1"/>
<path d="M1318.7 717.0V832.7M1318.2 832.2H1792.5" stroke="#333" stroke-width="1.200" fill="none"/>
<path d="M1313.7 832.2h5" stroke="#333" stroke-width="1.100"/><text x="1310.2" y="836.8" text-anchor="end" fill="#333">250</text>
<path d="M1313.7 817.9h5" stroke="#333" stroke-width="1.100"/><text x="1310.2" y="822.5" text-anchor="end" fill="#333">300</text>
<path d="M1313.7 803.5h5" stroke="#333" stroke-width="1.100"/><text x="1310.2" y="808.1" text-anchor="end" fill="#333">350</text>
<path d="M1313.7 789.2h5" stroke="#333" stroke-width="1.100"/><text x="1310.2" y="793.8" text-anchor="end" fill="#333">400</text>
<path d="M1313.7 774.9h5" stroke="#333" stroke-width="1.100"/><text x="1310.2" y="779.5" text-anchor="end" fill="#333">450</text>
<path d="M1313.7 760.5h5" stroke="#333" stroke-width="1.100"/><text x="1310.2" y="765.1" text-anchor="end" fill="#333">500</text>
<path d="M1313.7 746.2h5" stroke="#333" stroke-width="1.100"/><text x="1310.2" y="750.8" text-anchor="end" fill="#333">550</text>
<path d="M1313.7 731.9h5" stroke="#333" stroke-width="1.100"/><text x="1310.2" y="736.5" text-anchor="end" fill="#333">600</text>
<path d="M1313.7 717.5h5" stroke="#333" stroke-width="1.100"/><text x="1310.2" y="722.1" text-anchor="end" fill="#333">650</text>
<path d="M1318.7 832.2v5" stroke="#333" stroke-width="1.100"/><text x="1318.7" y="850.800" text-anchor="middle" fill="#333">2018-07-23</text>
<path d="M1410.0 832.2v5" stroke="#333" stroke-width="1.100"/><text x="1410.0" y="850.800" text-anchor="middle" fill="#333">2018-07-28</text>
<path d="M1501.3 832.2v5" stroke="#333" stroke-width="1.100"/><text x="1501.3" y="850.800" text-anchor="middle" fill="#333">2018-08-02</text>
<path d="M1592.6 832.2v5" stroke="#333" stroke-width="1.100"/><text x="1592.6" y="850.800" text-anchor="middle" fill="#333">2018-08-07</text>
<path d="M1683.9 832.2v5" stroke="#333" stroke-width="1.100"/><text x="1683.9" y="850.800" text-anchor="middle" fill="#333">2018-08-12</text>
<path d="M1775.2 832.2v5" stroke="#333" stroke-width="1.100"/><text x="1775.2" y="850.800" text-anchor="middle" fill="#333">2018-08-17</text>
<path d="M1318.7 769.2H1792.5" stroke="#f08257" stroke-width="1.500" stroke-dasharray="4 3.500"/><text x="1797.5" y="773.8" fill="#e9541a">469.28</text>
<path d="M1318.7 810.5H1792.5" stroke="#f08257" stroke-width="1.500" stroke-dasharray="4 3.500"/><text x="1797.5" y="815.1" fill="#e9541a">325.37</text>
<path d="M1317.9 753.4V807.4" stroke="#e34a00" stroke-width="1.100"/><rect x="1312.9" y="783.1" width="10" height="8.0" fill="#e34a00"/>
<path d="M1336.2 737.1V803.3" stroke="#0a86e0" stroke-width="1.100"/><rect x="1331.2" y="783" width="10" height="1.6" fill="#0a86e0"/>
<path d="M1354.4 784V818.5" stroke="#0a86e0" stroke-width="1.100"/><rect x="1349.4" y="784" width="10" height="18.6" fill="#0a86e0"/>
<path d="M1372.7 743.1V802.6" stroke="#e34a00" stroke-width="1.100"/><rect x="1367.7" y="782.3" width="10" height="20.3" fill="#e34a00"/>
<path d="M1390.9 738V802.6" stroke="#e34a00" stroke-width="1.100"/><rect x="1385.9" y="780" width="10" height="2.6" fill="#e34a00"/>
<path d="M1409.2 779.8V815.4" stroke="#0a86e0" stroke-width="1.100"/><rect x="1404.2" y="779.8" width="10" height="18.6" fill="#0a86e0"/>
<path d="M1427.5 783V810.4" stroke="#e34a00" stroke-width="1.100"/><rect x="1422.5" y="792.2" width="10" height="6.2" fill="#e34a00"/>
<path d="M1445.7 728.3V795" stroke="#e34a00" stroke-width="1.100"/><rect x="1440.7" y="768.5" width="10" height="24.2" fill="#e34a00"/>
<path d="M1464.0 768.5V817.5" stroke="#0a86e0" stroke-width="1.100"/><rect x="1459.0" y="768.5" width="10" height="39.4" fill="#0a86e0"/>
<path d="M1482.2 796.2V820.7" stroke="#0a86e0" stroke-width="1.100"/><rect x="1477.2" y="807.6" width="10" height="2.4" fill="#0a86e0"/>
<path d="M1500.5 788.3V820.7" stroke="#e34a00" stroke-width="1.100"/><rect x="1495.5" y="805.3" width="10" height="5.1" fill="#e34a00"/>
<path d="M1518.8 788.3V821.2" stroke="#0a86e0" stroke-width="1.100"/><rect x="1513.8" y="805.1" width="10" height="1.9" fill="#0a86e0"/>
<path d="M1537.0 795.9V818" stroke="#0a86e0" stroke-width="1.100"/><rect x="1532.0" y="806.2" width="10" height="1.0" fill="#0a86e0"/>
<path d="M1555.3 800.1V818" stroke="#0a86e0" stroke-width="1.100"/><rect x="1550.3" y="806.3" width="10" height="2.7" fill="#0a86e0"/>
<path d="M1573.5 784.4V817.5" stroke="#e34a00" stroke-width="1.100"/><rect x="1568.5" y="803.3" width="10" height="5.9" fill="#e34a00"/>
<path d="M1591.8 797.1V822.1" stroke="#0a86e0" stroke-width="1.100"/><rect x="1586.8" y="803.3" width="10" height="5.3" fill="#0a86e0"/>
<path d="M1610.1 775.9V817.5" stroke="#e34a00" stroke-width="1.100"/><rect x="1605.1" y="799.4" width="10" height="9.2" fill="#e34a00"/>
<path d="M1628.3 797.1V822.8" stroke="#0a86e0" stroke-width="1.100"/><rect x="1623.3" y="799.4" width="10" height="8.3" fill="#0a86e0"/>
<path d="M1646.6 794.1V821" stroke="#e34a00" stroke-width="1.100"/><rect x="1641.6" y="805.8" width="10" height="1.9" fill="#e34a00"/>
<path d="M1664.8 786.2V822.8" stroke="#e34a00" stroke-width="1.100"/><rect x="1659.8" y="805.1" width="10" height="1.0" fill="#e34a00"/>
<path d="M1683.1 795.4V815" stroke="#0a86e0" stroke-width="1.100"/><rect x="1678.1" y="805.1" width="10" height="2.6" fill="#0a86e0"/>
<path d="M1701.4 798V822.4" stroke="#0a86e0" stroke-width="1.100"/><rect x="1696.4" y="806.9" width="10" height="1.7" fill="#0a86e0"/>
<path d="M1719.6 764V819.8" stroke="#e34a00" stroke-width="1.100"/><rect x="1714.6" y="798.2" width="10" height="10.4" fill="#e34a00"/>
<path d="M1737.9 796.2V821.2" stroke="#0a86e0" stroke-width="1.100"/><rect x="1732.9" y="798.2" width="10" height="7.9" fill="#0a86e0"/>
<path d="M1756.1 789.3V817.5" stroke="#e34a00" stroke-width="1.100"/><rect x="1751.1" y="804.7" width="10" height="1.8" fill="#e34a00"/>
<path d="M1774.4 795.4V819.8" stroke="#0a86e0" stroke-width="1.100"/><rect x="1769.4" y="804.7" width="10" height="3.0" fill="#0a86e0"/>
<path d="M1792.7 790.6V818" stroke="#e34a00" stroke-width="1.100"/><rect x="1787.7" y="806.2" width="10" height="1.0" fill="#e34a00"/>
<rect x="1279.8" y="859.1" width="9.800" height="27.7" fill="#e34a00"/>
<rect x="1301.1" y="864.5" width="9.800" height="22.3" fill="#0a86e0"/>
<rect x="1322.5" y="864.5" width="9.800" height="22.3" fill="#0a86e0"/>
<rect x="1343.8" y="864.5" width="9.800" height="22.3" fill="#e34a00"/>
<rect x="1365.2" y="864.5" width="9.800" height="22.3" fill="#e34a00"/>
<rect x="1386.5" y="864.5" width="9.800" height="22.3" fill="#0a86e0"/>
<rect x="1407.9" y="864.5" width="9.800" height="22.3" fill="#e34a00"/>
<rect x="1429.2" y="864.5" width="9.800" height="22.3" fill="#e34a00"/>
<rect x="1450.6" y="864.5" width="9.800" height="22.3" fill="#0a86e0"/>
<rect x="1472.0" y="877.9" width="9.800" height="8.9" fill="#0a86e0"/>
<rect x="1493.3" y="877.5" width="9.800" height="9.3" fill="#e34a00"/>
<rect x="1514.7" y="877.9" width="9.800" height="8.9" fill="#0a86e0"/>
<rect x="1536.0" y="878.3" width="9.800" height="8.5" fill="#0a86e0"/>
<rect x="1557.3" y="879.3" width="9.800" height="7.5" fill="#0a86e0"/>
<rect x="1578.7" y="877.9" width="9.800" height="8.9" fill="#e34a00"/>
<rect x="1600.0" y="877.5" width="9.800" height="9.3" fill="#0a86e0"/>
<rect x="1621.4" y="859.1" width="9.800" height="27.7" fill="#e34a00"/>
<rect x="1642.8" y="864.5" width="9.800" height="22.3" fill="#0a86e0"/>
<rect x="1664.1" y="871" width="9.800" height="15.8" fill="#e34a00"/>
<rect x="1685.5" y="874.6" width="9.800" height="12.2" fill="#e34a00"/>
<rect x="1706.8" y="877.9" width="9.800" height="8.9" fill="#0a86e0"/>
<rect x="1728.2" y="875" width="9.800" height="11.8" fill="#0a86e0"/>
<rect x="1749.5" y="876.1" width="9.800" height="10.7" fill="#e34a00"/>
<rect x="1770.8" y="875.7" width="9.800" height="11.1" fill="#0a86e0"/>
<rect x="1792.2" y="864.1" width="9.800" height="22.7" fill="#e34a00"/>
<rect x="1813.5" y="877.2" width="9.800" height="9.6" fill="#0a86e0"/>
<rect x="1834.9" y="878.6" width="9.800" height="8.2" fill="#e34a00"/>
<path d="M1279.800 887H1845" stroke="#222" stroke-width="1"/>
<rect x="1253.500" y="889.500" width="609" height="29.700" fill="#fbfbfb" stroke="#dddfe2" stroke-width="1"/>
<path d="M1253.5 895.5L1263.6 897.2L1273.7 899.9L1282.2 896.6L1289.9 911.7L1307.5 912.4L1334.5 912.4L1341.2 910.7L1348.0 912.4L1354.7 905.7L1359.8 908.0L1368.2 904.0L1381.7 901.6L1395.2 903.3L1405.3 904.0L1412.1 899.6L1418.8 903.3L1428.9 904.0L1439.1 905.7L1449.2 902.3L1459.3 904.0L1469.4 902.3L1479.5 905.7L1486.3 909.0L1496.4 907.4L1506.5 905.7L1510.6 903.3L1520.0 904.0L1526.8 909.0L1536.9 903.3L1543.6 904.0L1550.4 906.7L1557.1 905.7L1564.6 898.9L1572.3 910.7L1584.1 910.7L1611.1 910.1L1617.9 909.0L1624.6 910.7L1631.4 908.0L1638.1 910.1L1665.1 910.1L1673.5 908.0L1678.6 910.1L1693.8 910.1L1698.8 910.7L1712.3 910.7L1719.1 909.4L1739.3 909.0L1746.1 907.4L1752.8 910.1L1766.3 910.7L1793.3 911.4L1801.7 908.0L1810.2 911.4L1820.3 911.7L1833.8 910.7L1842.2 909.0L1848.3 905.7L1854.0 910.1L1862.5 911.4L1862.5 919.200L1253.5 919.200Z" fill="#e6e8ea" stroke="#d4d7da" stroke-width=".6"/>
<rect x="1510.600" y="889.500" width="183.200" height="29.700" fill="rgba(167,183,204,.4)"/>
<path d="M1510.6 889.500V919.200" stroke="#a7b7cc" stroke-width="1.200"/><rect x="1507.6" y="898.400" width="6" height="11.600" rx="1.500" fill="#a7b7cc"/><path d="M1509.1 902.800h3M1509.1 905.600h3" stroke="#fff" stroke-width="1"/>
<path d="M1693.8 889.500V919.200" stroke="#a7b7cc" stroke-width="1.200"/><rect x="1690.8" y="898.400" width="6" height="11.600" rx="1.500" fill="#a7b7cc"/><path d="M1692.3 902.800h3M1692.3 905.600h3" stroke="#fff" stroke-width="1"/>
</svg>
<i class="abs" style="left:-1px;top:246px;width:1px;height:5px;background:#f8f8f8"></i><i class="abs" style="right:-1px;top:246px;width:1px;height:5px;background:#f8f8f8"></i><!--/KLINE--></div>
<!--/MAIN-->
</div>
</body>
</html>
